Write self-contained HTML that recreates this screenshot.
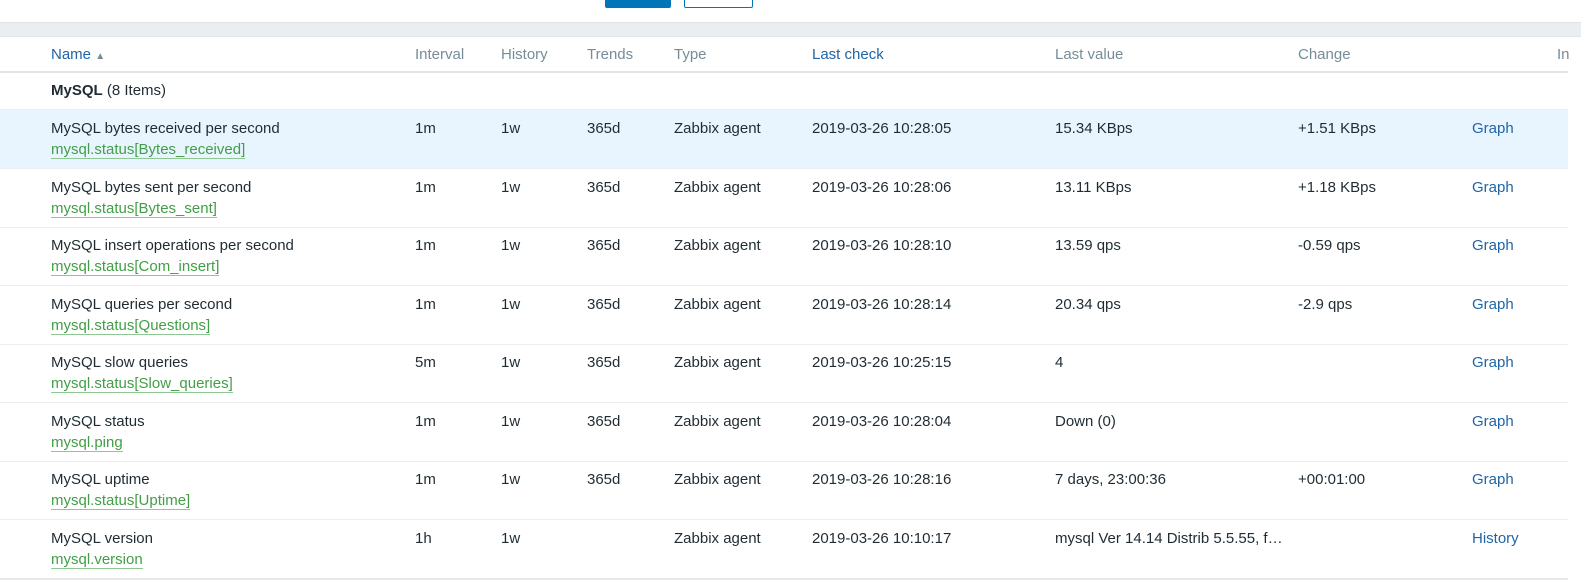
<!DOCTYPE html>
<html><head><style>
body{margin:0;width:1581px;height:584px;overflow:hidden;background:#fff;font-family:"Liberation Sans",Arial,sans-serif;font-size:15px;color:#1f2c33;position:relative}
.a{position:absolute}
.btn1{left:605px;top:-2px;width:66px;height:10px;background:#0275b8;border-radius:0 0 2px 2px}
.btn2{left:684px;top:-2px;width:67px;height:9px;border:1px solid #0275b8;border-top:none;border-radius:0 0 2px 2px}
.band{left:0;top:22px;width:1581px;height:13px;background:#ebeef0;border-top:1px solid #dfe4e7;border-bottom:1px solid #dfe4e7}
.hdr{left:0;top:36px;height:35px;width:1568px;border-bottom:2px solid #dfe4e7}
.t{position:absolute;white-space:nowrap}
.h{color:#768d99;top:10px}
.hl{color:#1f65a5}
.row{position:absolute;left:0;width:1568px;height:58px;border-bottom:1px solid #ebeef0}
.row .t{top:10px}
.k{color:#429e47;top:32px!important;border-bottom:1px solid #8fc793;line-height:16px}
.g{color:#1f65a5}
</style></head><body>
<div class="a btn1"></div><div class="a btn2"></div>
<div class="a band"></div>
<div class="a hdr">
<span class="t h hl" style="left:51px">Name <span style="font-size:10px;color:#768d99">▲</span></span>
<span class="t h" style="left:415px">Interval</span>
<span class="t h" style="left:501px">History</span>
<span class="t h" style="left:587px">Trends</span>
<span class="t h" style="left:674px">Type</span>
<span class="t h hl" style="left:812px">Last check</span>
<span class="t h" style="left:1055px">Last value</span>
<span class="t h" style="left:1298px">Change</span>
<span class="t h" style="left:1557px">In</span>
</div>
<div class="row" style="top:73px;height:36px"><span class="t" style="left:51px;top:9px"><b>MySQL</b> (8 Items)</span></div>

<div class="row" style="top:110px;background:#e8f5ff"><span class="t" style="left:51px">MySQL bytes received per second</span><span class="t k" style="left:51px">mysql.status[Bytes_received]</span><span class="t" style="left:415px">1m</span><span class="t" style="left:501px">1w</span><span class="t" style="left:587px">365d</span><span class="t" style="left:674px">Zabbix agent</span><span class="t" style="left:812px">2019-03-26 10:28:05</span><span class="t" style="left:1055px">15.34 KBps</span><span class="t" style="left:1298px">+1.51 KBps</span><span class="t g" style="left:1472px">Graph</span></div>

<div class="row" style="top:168.5px"><span class="t" style="left:51px">MySQL bytes sent per second</span><span class="t k" style="left:51px">mysql.status[Bytes_sent]</span><span class="t" style="left:415px">1m</span><span class="t" style="left:501px">1w</span><span class="t" style="left:587px">365d</span><span class="t" style="left:674px">Zabbix agent</span><span class="t" style="left:812px">2019-03-26 10:28:06</span><span class="t" style="left:1055px">13.11 KBps</span><span class="t" style="left:1298px">+1.18 KBps</span><span class="t g" style="left:1472px">Graph</span></div>

<div class="row" style="top:227px"><span class="t" style="left:51px">MySQL insert operations per second</span><span class="t k" style="left:51px">mysql.status[Com_insert]</span><span class="t" style="left:415px">1m</span><span class="t" style="left:501px">1w</span><span class="t" style="left:587px">365d</span><span class="t" style="left:674px">Zabbix agent</span><span class="t" style="left:812px">2019-03-26 10:28:10</span><span class="t" style="left:1055px">13.59 qps</span><span class="t" style="left:1298px">-0.59 qps</span><span class="t g" style="left:1472px">Graph</span></div>

<div class="row" style="top:285.5px"><span class="t" style="left:51px">MySQL queries per second</span><span class="t k" style="left:51px">mysql.status[Questions]</span><span class="t" style="left:415px">1m</span><span class="t" style="left:501px">1w</span><span class="t" style="left:587px">365d</span><span class="t" style="left:674px">Zabbix agent</span><span class="t" style="left:812px">2019-03-26 10:28:14</span><span class="t" style="left:1055px">20.34 qps</span><span class="t" style="left:1298px">-2.9 qps</span><span class="t g" style="left:1472px">Graph</span></div>

<div class="row" style="top:344px"><span class="t" style="left:51px">MySQL slow queries</span><span class="t k" style="left:51px">mysql.status[Slow_queries]</span><span class="t" style="left:415px">5m</span><span class="t" style="left:501px">1w</span><span class="t" style="left:587px">365d</span><span class="t" style="left:674px">Zabbix agent</span><span class="t" style="left:812px">2019-03-26 10:25:15</span><span class="t" style="left:1055px">4</span><span class="t g" style="left:1472px">Graph</span></div>

<div class="row" style="top:402.5px"><span class="t" style="left:51px">MySQL status</span><span class="t k" style="left:51px">mysql.ping</span><span class="t" style="left:415px">1m</span><span class="t" style="left:501px">1w</span><span class="t" style="left:587px">365d</span><span class="t" style="left:674px">Zabbix agent</span><span class="t" style="left:812px">2019-03-26 10:28:04</span><span class="t" style="left:1055px">Down (0)</span><span class="t g" style="left:1472px">Graph</span></div>

<div class="row" style="top:461px"><span class="t" style="left:51px">MySQL uptime</span><span class="t k" style="left:51px">mysql.status[Uptime]</span><span class="t" style="left:415px">1m</span><span class="t" style="left:501px">1w</span><span class="t" style="left:587px">365d</span><span class="t" style="left:674px">Zabbix agent</span><span class="t" style="left:812px">2019-03-26 10:28:16</span><span class="t" style="left:1055px">7 days, 23:00:36</span><span class="t" style="left:1298px">+00:01:00</span><span class="t g" style="left:1472px">Graph</span></div>

<div class="row" style="top:519.5px;border-bottom:2px solid #e4e8ea"><span class="t" style="left:51px">MySQL version</span><span class="t k" style="left:51px">mysql.version</span><span class="t" style="left:415px">1h</span><span class="t" style="left:501px">1w</span><span class="t" style="left:674px">Zabbix agent</span><span class="t" style="left:812px">2019-03-26 10:10:17</span><span class="t" style="left:1055px">mysql Ver 14.14 Distrib 5.5.55, f…</span><span class="t g" style="left:1472px">History</span></div>
</body></html>
